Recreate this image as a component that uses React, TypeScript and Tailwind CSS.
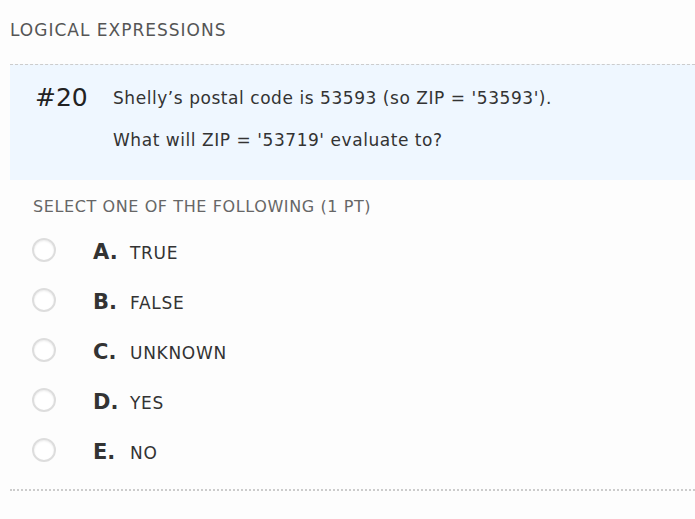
import React from "react";

const options = [
  { l: "A.", t: "TRUE" },
  { l: "B.", t: "FALSE" },
  { l: "C.", t: "UNKNOWN" },
  { l: "D.", t: "YES" },
  { l: "E.", t: "NO" },
];

export default function App() {
  return (
    <div className="w-[695px] h-[519px] bg-[#fdfdfd] overflow-hidden font-['DejaVu_Sans',sans-serif]">
      <div className="pt-[20px] pl-[10px] text-[17px] leading-[20px] text-[#555] tracking-[1px]">
        LOGICAL EXPRESSIONS
      </div>
      <div className="ml-[10px] mt-[24px] border-t border-dashed border-[#ccc] bg-[#eff7ff] h-[116px] flex">
        <div className="pl-[25px] pt-[18px] text-[25px] leading-[30px] text-[#222] w-[103px]">#20</div>
        <div className="pt-[23px] text-[17px] text-[#333] tracking-[0.55px]">
          <div className="leading-[20px]">Shelly’s postal code is 53593 (so ZIP = '53593').</div>
          <div className="leading-[20px] mt-[22px]">What will ZIP = '53719' evaluate to?</div>
        </div>
      </div>
      <div className="pl-[33px] mt-[17px] text-[16px] leading-[20px] text-[#666] tracking-[0.6px]">
        SELECT ONE OF THE FOLLOWING (1 PT)
      </div>
      <div className="mt-[9px] flex flex-col">
        {options.map((o) => (
          <div key={o.l} className="h-[50px] flex items-center">
            <div className="ml-[32px] mb-[2px] w-[24px] h-[24px] rounded-full border-2 border-[#ddd] bg-white shadow-[inset_0_1px_2px_rgba(0,0,0,0.08)]" />
            <div className="ml-[37px] w-[37px] text-[21px] font-bold text-[#333] pt-[3px]">
              {o.l}
            </div>
            <div className="text-[17px] text-[#333] pt-[6px] tracking-[0.7px]">{o.t}</div>
          </div>
        ))}
      </div>
      <div className="ml-[10px] mt-[13px] border-t-2 border-dotted border-[#ccc]" />
    </div>
  );
}
